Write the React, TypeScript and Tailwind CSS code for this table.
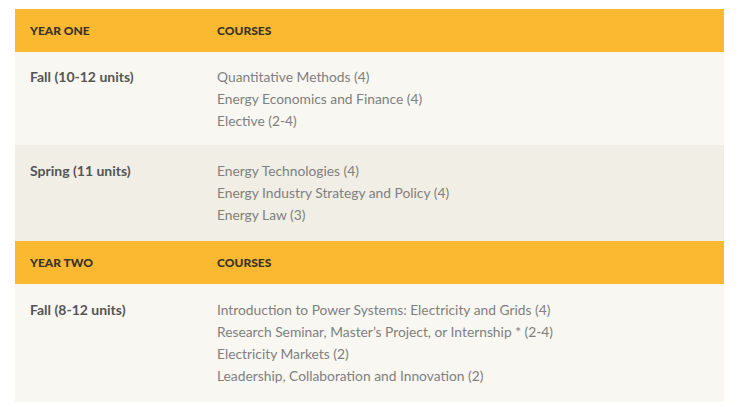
const years = [
  {
    title: "YEAR ONE",
    terms: [
      {
        label: "Fall (10-12 units)",
        courses: [
          "Quantitative Methods (4)",
          "Energy Economics and Finance (4)",
          "Elective (2-4)",
        ],
        bg: "bg-[#f8f7f1]",
        pad: "pt-[14px] pb-[13px]",
      },
      {
        label: "Spring (11 units)",
        courses: [
          "Energy Technologies (4)",
          "Energy Industry Strategy and Policy (4)",
          "Energy Law (3)",
        ],
        bg: "bg-[#f1eee5]",
        pad: "pt-[15px] pb-[15px]",
      },
    ],
  },
  {
    title: "YEAR TWO",
    terms: [
      {
        label: "Fall (8-12 units)",
        courses: [
          "Introduction to Power Systems: Electricity and Grids (4)",
          "Research Seminar, Master\u2019s Project, or Internship * (2-4)",
          "Electricity Markets (2)",
          "Leadership, Collaboration and Innovation (2)",
        ],
        bg: "bg-[#f8f7f1]",
        pad: "pt-[15px] pb-[15px]",
      },
    ],
  },
];

export default function App() {
  return (
    <div className="min-h-screen bg-white pt-[9px] pl-[15px] font-['Lato',sans-serif]">
      <div className="w-[709px]">
        {years.map((year) => (
          <div key={year.title}>
            <div className="flex h-[43px] items-center bg-[#fbb931] text-[12px] font-black text-[#3a3429]">
              <div className="w-[202px] pl-[15px]">{year.title}</div>
              <div>COURSES</div>
            </div>
            {year.terms.map((term) => (
              <div key={term.label} className={`flex ${term.bg} ${term.pad}`}>
                <div className="w-[202px] pl-[15px] text-[14px] leading-[22px] font-bold text-[#555555]">
                  {term.label}
                </div>
                <div className="text-[13.8px] leading-[22px] text-[#808080]">
                  {term.courses.map((c) => (
                    <div key={c}>{c}</div>
                  ))}
                </div>
              </div>
            ))}
          </div>
        ))}
      </div>
    </div>
  );
}
